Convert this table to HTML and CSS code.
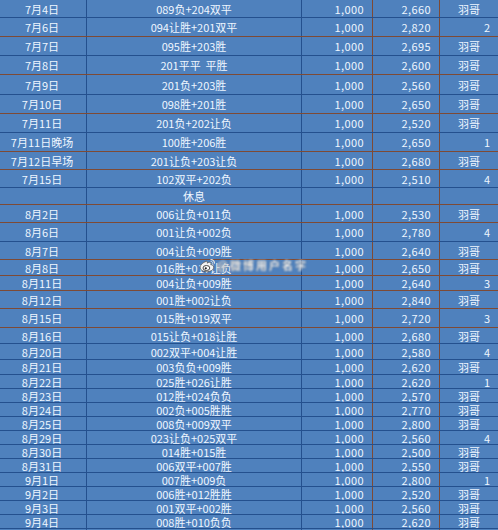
FILE: index.html
```html
<!DOCTYPE html>
<html lang="zh-CN">
<head>
<meta charset="utf-8">
<title>表</title>
<link rel="stylesheet" href="styles.css">
</head>
<body>
<div class="sheet">
  <div class="row h18 bb"><div class="c d">7月4日</div><div class="c m">089负+204双平</div><div class="c n">1,000</div><div class="c n">2,660</div><div class="c w">羽哥</div></div>
  <div class="row h19 br"><div class="c d">7月6日</div><div class="c m">094让胜+201双平</div><div class="c n">1,000</div><div class="c n">2,820</div><div class="c w r">2</div></div>
  <div class="row h19 bb"><div class="c d">7月7日</div><div class="c m">095胜+203胜</div><div class="c n">1,000</div><div class="c n">2,695</div><div class="c w">羽哥</div></div>
  <div class="row h19 br"><div class="c d">7月8日</div><div class="c m">201平平&nbsp; 平胜</div><div class="c n">1,000</div><div class="c n">2,600</div><div class="c w">羽哥</div></div>
  <div class="row h20 bb"><div class="c d">7月9日</div><div class="c m">201负+203胜</div><div class="c n">1,000</div><div class="c n">2,560</div><div class="c w">羽哥</div></div>
  <div class="row h19 br"><div class="c d">7月10日</div><div class="c m">098胜+201胜</div><div class="c n">1,000</div><div class="c n">2,650</div><div class="c w">羽哥</div></div>
  <div class="row h19 bb"><div class="c d">7月11日</div><div class="c m">201负+202让负</div><div class="c n">1,000</div><div class="c n">2,520</div><div class="c w">羽哥</div></div>
  <div class="row h19 br"><div class="c d">7月11日晚场</div><div class="c m">100胜+206胜</div><div class="c n">1,000</div><div class="c n">2,650</div><div class="c w r">1</div></div>
  <div class="row h18 br"><div class="c d">7月12日早场</div><div class="c m">201让负+203让负</div><div class="c n">1,000</div><div class="c n">2,680</div><div class="c w">羽哥</div></div>
  <div class="row h18 bb"><div class="c d">7月15日</div><div class="c m">102双平+202负</div><div class="c n">1,000</div><div class="c n">2,510</div><div class="c w r">4</div></div>
  <div class="row h17 br"><div class="c d"></div><div class="c m">休息</div><div class="c n"></div><div class="c n"></div><div class="c w"></div></div>
  <div class="row h18 br"><div class="c d">8月2日</div><div class="c m">006让负+011负</div><div class="c n">1,000</div><div class="c n">2,530</div><div class="c w">羽哥</div></div>
  <div class="row h19 bb"><div class="c d">8月6日</div><div class="c m">001让负+002负</div><div class="c n">1,000</div><div class="c n">2,780</div><div class="c w r">4</div></div>
  <div class="row h18 br"><div class="c d">8月7日</div><div class="c m">004让负+009胜</div><div class="c n">1,000</div><div class="c n">2,640</div><div class="c w">羽哥</div></div>
  <div class="row h16 br"><div class="c d">8月8日</div><div class="c m">016胜+017让负</div><div class="c n">1,000</div><div class="c n">2,650</div><div class="c w">羽哥</div></div>
  <div class="row h15 br"><div class="c d">8月11日</div><div class="c m">004让负+009胜</div><div class="c n">1,000</div><div class="c n">2,640</div><div class="c w r">3</div></div>
  <div class="row h18 br"><div class="c d">8月12日</div><div class="c m">001胜+002让负</div><div class="c n">1,000</div><div class="c n">2,840</div><div class="c w">羽哥</div></div>
  <div class="row h19 br"><div class="c d">8月15日</div><div class="c m">015胜+019双平</div><div class="c n">1,000</div><div class="c n">2,720</div><div class="c w r">3</div></div>
  <div class="row h16 bb"><div class="c d">8月16日</div><div class="c m">015让负+018让胜</div><div class="c n">1,000</div><div class="c n">2,680</div><div class="c w">羽哥</div></div>
  <div class="row h16 bb"><div class="c d">8月20日</div><div class="c m">002双平+004让胜</div><div class="c n">1,000</div><div class="c n">2,580</div><div class="c w r">4</div></div>
  <div class="row h15 bb"><div class="c d">8月21日</div><div class="c m">003负负+009胜</div><div class="c n">1,000</div><div class="c n">2,620</div><div class="c w">羽哥</div></div>
  <div class="row h14 bb"><div class="c d">8月22日</div><div class="c m">025胜+026让胜</div><div class="c n">1,000</div><div class="c n">2,620</div><div class="c w r">1</div></div>
  <div class="row h14 bb"><div class="c d">8月23日</div><div class="c m">012胜+024负负</div><div class="c n">1,000</div><div class="c n">2,570</div><div class="c w">羽哥</div></div>
  <div class="row h14 bb"><div class="c d">8月24日</div><div class="c m">002负+005胜胜</div><div class="c n">1,000</div><div class="c n">2,770</div><div class="c w">羽哥</div></div>
  <div class="row h14 bb"><div class="c d">8月25日</div><div class="c m">008负+009双平</div><div class="c n">1,000</div><div class="c n">2,800</div><div class="c w">羽哥</div></div>
  <div class="row h14 bb"><div class="c d">8月29日</div><div class="c m">023让负+025双平</div><div class="c n">1,000</div><div class="c n">2,560</div><div class="c w r">4</div></div>
  <div class="row h14 bb"><div class="c d">8月30日</div><div class="c m">014胜+015胜</div><div class="c n">1,000</div><div class="c n">2,500</div><div class="c w">羽哥</div></div>
  <div class="row h14 bb"><div class="c d">8月31日</div><div class="c m">006双平+007胜</div><div class="c n">1,000</div><div class="c n">2,550</div><div class="c w">羽哥</div></div>
  <div class="row h14 bb"><div class="c d">9月1日</div><div class="c m">007胜+009负</div><div class="c n">1,000</div><div class="c n">2,800</div><div class="c w r">1</div></div>
  <div class="row h14 bb"><div class="c d">9月2日</div><div class="c m">006胜+012胜胜</div><div class="c n">1,000</div><div class="c n">2,520</div><div class="c w">羽哥</div></div>
  <div class="row h14 bb"><div class="c d">9月3日</div><div class="c m">001双平+002胜</div><div class="c n">1,000</div><div class="c n">2,560</div><div class="c w">羽哥</div></div>
  <div class="row h14 bb"><div class="c d">9月4日</div><div class="c m">008胜+010负负</div><div class="c n">1,000</div><div class="c n">2,620</div><div class="c w">羽哥</div></div>
  <div class="row h14 bb"><div class="c d"></div><div class="c m"></div><div class="c n"></div><div class="c n"></div><div class="c w"></div></div>

  <div class="watermark">
    <svg class="wb" width="17" height="15" viewBox="0 0 17 15">
      <path d="M7 3.5C3.8 4.6 1 7 1.2 9.6 1.5 12.6 5 14 8.6 13.7 12.6 13.3 15 11.2 14.6 8.8 14.3 7.1 12.6 6.7 11.8 6.8 12.3 5.6 12 4.4 10.6 4.3 9.6 4.2 8.6 4.8 8.2 5.2 8.6 3.8 8.2 3 7 3.5Z" fill="#f4f4f4" stroke="#555" stroke-width="0.8"/>
      <ellipse cx="7.4" cy="10" rx="3.4" ry="2.5" fill="#fff" stroke="#333" stroke-width="0.9"/>
      <circle cx="6.8" cy="10.3" r="1.1" fill="#222"/>
      <path d="M11.5 1.5C13.8 1.3 15.8 3.2 15.5 5.6" fill="none" stroke="#e6e6e6" stroke-width="1.1"/>
      <path d="M11.6 3.3C12.9 3.2 13.9 4.2 13.8 5.4" fill="none" stroke="#e6e6e6" stroke-width="1"/>
    </svg>
    <span class="wm-text">@微博用户名字</span>
  </div>
</div>
</body>
</html>
```

FILE: styles.css
```css
html, body {
  margin: 0;
  padding: 0;
  background: #4f81bd;
}
body {
  width: 498px;
  height: 530px;
  overflow: hidden;
  font-family: "Noto Sans CJK SC", "Noto Sans", sans-serif;
  font-size: 11px;
  color: #eef6ff;
}
.sheet {
  position: relative;
  width: 498px;
}
.row {
  display: grid;
  grid-template-columns: 87px 215px 71px 67px 1fr;
  box-sizing: border-box;
  border-bottom: 1px solid #2a4f86;
  background: #4f81bd;
}
.row.br { border-bottom-color: #7e4a35; }
.row.bb { border-bottom-color: #24508e; }
.h14 { height: 14px; }
.h15 { height: 15px; }
.h16 { height: 16px; }
.h17 { height: 17px; }
.h18 { height: 18px; }
.h19 { height: 19px; }
.h20 { height: 20px; }
.c {
  display: flex;
  align-items: center;
  line-height: 12px;
  white-space: nowrap;
  overflow: hidden;
  box-sizing: border-box;
}
.d {
  justify-content: center;
  padding-right: 2px;
  border-right: 1px solid #24508e;
}
.m {
  justify-content: center;
  border-right: 1px solid #24508e;
}
.n {
  justify-content: flex-end;
  padding-right: 8px;
  border-right: 1px solid #7e4a35;
  letter-spacing: 0.4px;
}
.w {
  justify-content: center;
}
.w.r {
  justify-content: flex-end;
  padding-right: 8px;
}
.watermark {
  position: absolute;
  left: 199px;
  top: 257px;
  display: flex;
  align-items: center;
  gap: 1px;
}
.wb { display: block; }
.wm-text {
  font-size: 11px;
  font-weight: bold;
  color: #f6f6f6;
  filter: blur(0.9px);
  letter-spacing: 2px;
  text-shadow: 0 0 1px #2a2a2a;
}
```
